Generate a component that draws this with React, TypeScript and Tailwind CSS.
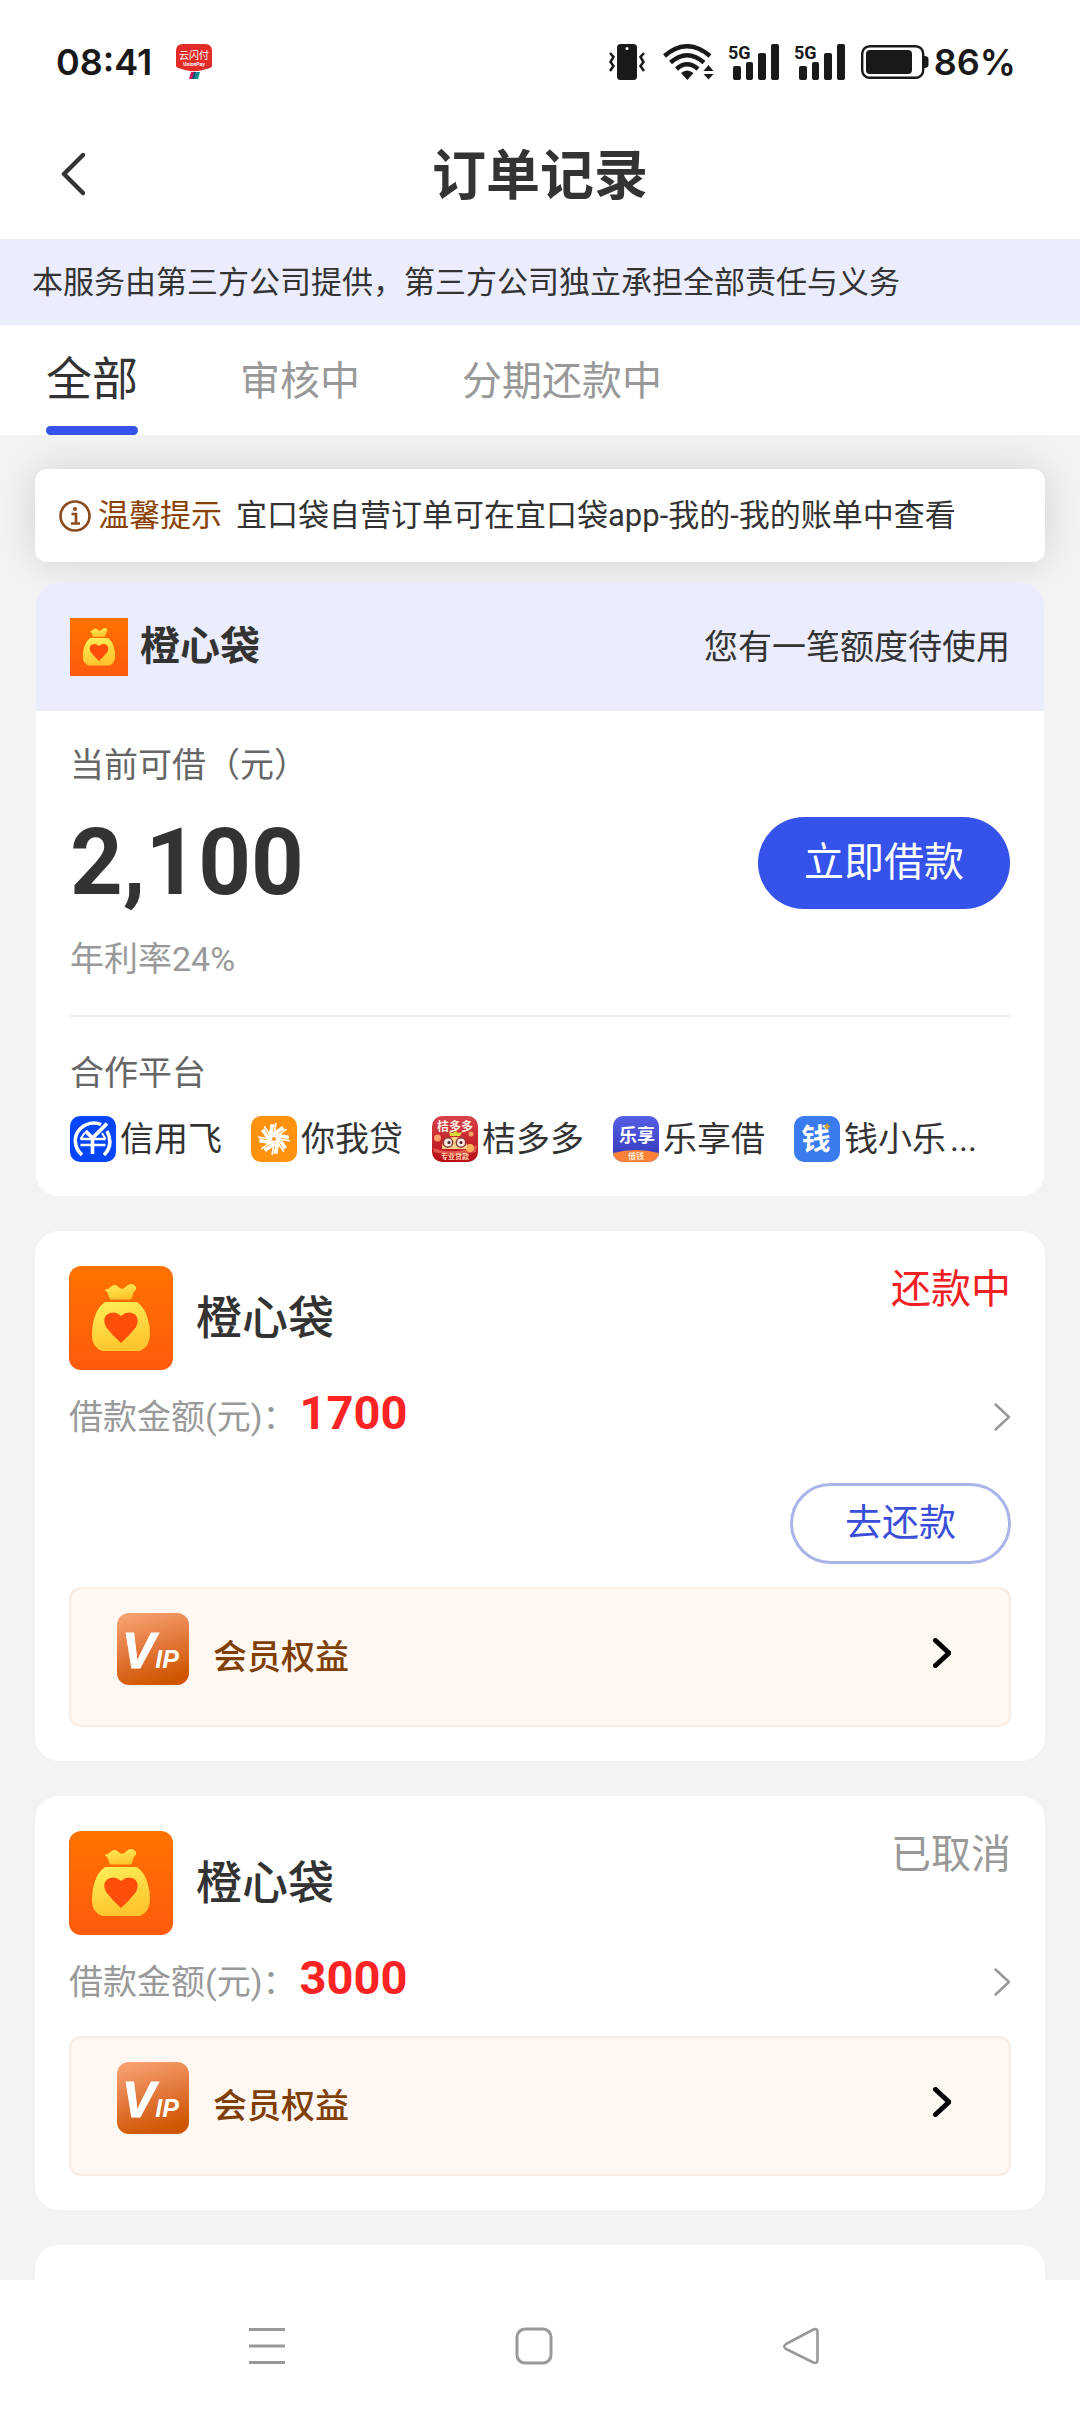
import React from "react";

function UnionPayIcon() {
  return (
    <svg width="36" height="36" viewBox="0 0 36 36" aria-label="云闪付">
      <path d="M7 0h22q7 0 7 7v15q0 1-2 2l-9 2.500q-7 1.500-14 0L2 24q-2-1-2-2V7q0-7 7-7z" fill="#e32b27" />
      <text x="18" y="15" fontSize="10" fill="#fff" textAnchor="middle" fontFamily="Noto Sans CJK SC, sans-serif">云闪付</text>
      <text x="18" y="22" fontSize="5" fontWeight="700" fill="#fff" textAnchor="middle" fontFamily="Roboto, sans-serif">UnionPay</text>
      <path d="M15 28h4l-2 7h-4z" fill="#c2185b" />
      <path d="M18 28h3l-2 7h-3z" fill="#1b4a7a" />
      <path d="M20 28h4l-2 7h-4z" fill="#0b8a8a" />
    </svg>
  );
}

function VibrateIcon() {
  return (
    <svg width="36" height="36" viewBox="0 0 36 36" fill="none" stroke="#191919" strokeWidth="2.500">
      <rect x="8" y="0" width="20" height="36" rx="3.500" fill="#191919" stroke="none" />
      <circle cx="18" cy="4.500" r="1.500" fill="#fff" stroke="none" />
      <path d="M1 9l3.500 4-3 5 3 4L1 27" />
      <path d="M35 9l-3.500 4 3 5-3 4 3.500 5" />
    </svg>
  );
}

function WifiIcon() {
  return (
    <svg width="51" height="36" viewBox="0 0 51 36" fill="none" stroke="#191919" strokeWidth="4.400">
      <path d="M1.500 12Q24 -7.500 47 12" />
      <path d="M7.500 18.500Q24 4 41 18.500" />
      <path d="M13.500 25Q24 15.500 35 25" />
      <path d="M18 29q6-5 12.500 0L24.300 36z" fill="#191919" stroke="none" />
      <path d="M45.500 21l5 6h-10zM45.500 35.500l5-5.500h-10z" fill="#191919" stroke="none" />
    </svg>
  );
}

function SignalIcon() {
  return (
    <svg width="51" height="38" viewBox="0 0 51 38" fill="#191919">
      <text x="0" y="17" fontSize="18" fontWeight="700" fontFamily="Roboto, sans-serif">5G</text>
      <rect x="5" y="24" width="8" height="14" rx="2" />
      <rect x="18" y="20" width="7" height="18" rx="2" />
      <rect x="30" y="11" width="8" height="27" rx="2" />
      <rect x="43" y="2" width="8" height="36" rx="2" />
    </svg>
  );
}

function BatteryIcon() {
  return (
    <svg width="68" height="34" viewBox="0 0 68 34">
      <rect x="1.200" y="1.200" width="61" height="31.600" rx="7.500" fill="none" stroke="#191919" strokeWidth="2.400" />
      <rect x="5" y="5" width="46" height="24" rx="4" fill="#191919" />
      <path d="M63 11q4.500 0 4.500 3v6q0 3-4.500 3z" fill="#191919" />
    </svg>
  );
}

function StatusBar() {
  return (
    <div className="flex h-[124px] items-center pr-16 pl-14 font-['Inter','Noto_Sans_CJK_SC',sans-serif] text-[36px] text-[#191919]">
      <span className="font-semibold">08:41</span>
      <span className="ml-6">
        <UnionPayIcon />
      </span>
      <div className="ml-auto flex items-center">
        <VibrateIcon />
        <span className="ml-[18px]">
          <WifiIcon />
        </span>
        <span className="mb-[3px] ml-[14px]">
          <SignalIcon />
        </span>
        <span className="mb-[3px] ml-[15px]">
          <SignalIcon />
        </span>
        <span className="mr-[5px] ml-4">
          <BatteryIcon />
        </span>
        <span className="font-semibold">86%</span>
      </div>
    </div>
  );
}

function BagLogo({ id, className }: { id: string; className: string }) {
  return (
    <svg viewBox="0 0 104 104" className={className} aria-hidden="true">
      <defs>
        <linearGradient id={id + "-bg"} x1="0" y1="0" x2="0" y2="1">
          <stop offset="0" stopColor="#ff7300" />
          <stop offset="1" stopColor="#ff5a0c" />
        </linearGradient>
        <linearGradient id={id + "-bag"} x1="0" y1="0" x2="0.300" y2="1">
          <stop offset="0" stopColor="#fdf05a" />
          <stop offset="1" stopColor="#ffc52e" />
        </linearGradient>
      </defs>
      <rect width="104" height="104" fill={"url(#" + id + "-bg)"} />
      <path
        d="M35.500 23.500q3 .500 6-2.500 4-4 8 0 3.500 3.500 7 0 4-4.500 8-2.500 4 2.500 2 6-2.500 1.500-3 6l-1.500 3H41l-1.500-4q-.500-3-4-6z"
        fill={"url(#" + id + "-bag)"}
      />
      <path
        d="M36 36H68q8 6 10.500 16 2.500 7 2.500 16 0 13-10 17H33q-10-4-10-15 0-12 3-20 3-9 10-14z"
        fill={"url(#" + id + "-bag)"}
      />
      <path d="M52 50q7-6 14-1.500 5 5 1 12.500Q61 69 52 77 43 69 37 61q-4-8 1-12.500 7-4.500 14 1.500z" fill="#ff4d0a" />
    </svg>
  );
}

function VipIcon({ id }: { id: string }) {
  return (
    <svg width="72" height="72" viewBox="0 0 72 72" className="mb-2 ml-[46px] shrink-0" role="img" aria-label="VIP">
      <defs>
        <linearGradient id={id} x1="0.200" y1="0" x2="0.500" y2="1">
          <stop offset="0" stopColor="#f7a271" />
          <stop offset="0.550" stopColor="#e17436" />
          <stop offset="1" stopColor="#cf5600" />
        </linearGradient>
      </defs>
      <rect width="72" height="72" rx="12" fill={"url(#" + id + ")"} />
      <text x="5" y="55" fill="#fff" stroke="#fff" strokeWidth="1" fontSize="50" fontFamily="Liberation Sans, sans-serif" fontWeight="700" fontStyle="italic">
        V<tspan fontSize="25" strokeWidth="0">IP</tspan>
      </text>
    </svg>
  );
}

function Chevron({ className, size, stroke }: { className: string; size: number; stroke: number }) {
  return (
    <svg width={size * 0.6} height={size} viewBox="0 0 18 30" className={className} fill="none" stroke="currentColor" strokeWidth={stroke} aria-hidden="true">
      <path d="M2.500 2.500L16 15 2.500 27.500" strokeLinecap="round" strokeLinejoin="round" />
    </svg>
  );
}

function XinyongfeiLogo() {
  return (
    <svg width="46" height="46" viewBox="0 0 46 46" aria-hidden="true">
      <rect width="46" height="46" rx="10" fill="#0546fb" />
      <g fill="none" stroke="#fff">
        <path d="M12 39C4 32 3 20 10 13q6-6 14-6 4 0 7 1.500" strokeWidth="3.600" />
        <path d="M37 15q7 14-3 24" strokeWidth="3.600" />
        <path d="M15.500 15l7 7L37 7.500" strokeWidth="3.800" />
        <path d="M10.500 23h25M10.500 29h25" strokeWidth="2.600" />
        <path d="M22.500 22v16" strokeWidth="3.600" />
        <path d="M10.500 23l4-6M32 17l3.500 6" strokeWidth="2" />
      </g>
    </svg>
  );
}

function NiwodaiLogo() {
  const petals = [0, 45, 90, 135, 180, 225, 270, 315];
  return (
    <svg width="46" height="46" viewBox="0 0 46 46" aria-hidden="true">
      <rect width="46" height="46" rx="10" fill="#ff920f" />
      <g fill="none" stroke="#fff">
        {petals.map((a) => (
          <g key={a} transform={"rotate(" + a + " 23 23)"}>
            <path d="M19 21l2.500-12.500" strokeWidth="3.600" />
            <path d="M23 18l2-11" strokeWidth="1.600" />
            <path d="M19.500 9.500l4 0" strokeWidth="2" />
          </g>
        ))}
      </g>
      <circle cx="23" cy="23" r="3" fill="none" stroke="#fff" strokeWidth="2" />
    </svg>
  );
}

function JuduoduoLogo() {
  return (
    <svg width="46" height="46" viewBox="0 0 46 46" aria-hidden="true">
      <defs>
        <linearGradient id="jdd" x1="0" y1="0" x2="0" y2="1">
          <stop offset="0" stopColor="#d8434a" />
          <stop offset="1" stopColor="#b90d14" />
        </linearGradient>
      </defs>
      <rect width="46" height="46" rx="10" fill="url(#jdd)" />
      <path d="M1 32q22 8 44-3l-1 7q-21 6-42 0z" fill="#e3574c" />
      <circle cx="5.500" cy="22" r="3.500" fill="#f5a06a" />
      <circle cx="39" cy="18" r="2.500" fill="#f5a06a" />
      <circle cx="38" cy="32" r="4" fill="#fbb45c" />
      <path d="M10 33q-1-11 12-12 14 0 13 12z" fill="#f8d58a" />
      <path d="M18 20l-1-4 4 1 3-2 2 2 4-1-2 4z" fill="#d9d93c" />
      <circle cx="16" cy="26.500" r="4.700" fill="#fbe9e0" stroke="#8c3a3a" strokeWidth="1.500" />
      <circle cx="29" cy="26.500" r="4.700" fill="#fbe9e0" stroke="#8c3a3a" strokeWidth="1.500" />
      <circle cx="17" cy="26.500" r="1.600" fill="#4b2730" />
      <circle cx="29" cy="26.500" r="1.600" fill="#4b2730" />
      <g fill="#fff0e6" textAnchor="middle" fontFamily="Noto Sans CJK SC, sans-serif" fontWeight="700">
        <text x="23" y="15" fontSize="12">桔多多</text>
        <text x="23" y="43" fontSize="7" fill="#ffd5b0">专业贷款</text>
      </g>
    </svg>
  );
}

function LexiangLogo() {
  return (
    <svg width="46" height="46" viewBox="0 0 46 46" aria-hidden="true">
      <defs>
        <linearGradient id="lxj" x1="0" y1="0" x2="0" y2="1">
          <stop offset="0" stopColor="#5560e6" />
          <stop offset="0.800" stopColor="#3a3fc0" />
        </linearGradient>
        <clipPath id="lxj-clip">
          <rect width="46" height="46" rx="10" />
        </clipPath>
      </defs>
      <g clipPath="url(#lxj-clip)">
        <rect width="46" height="46" fill="url(#lxj)" />
        <path d="M0 37q23-6 46 0v9H0z" fill="#fb8136" />
      </g>
      <g fill="#fff" textAnchor="middle" fontFamily="Noto Sans CJK SC, sans-serif" fontWeight="700">
        <text x="24" y="26" fontSize="18">乐享</text>
        <text x="23" y="43" fontSize="8" fill="#ffe6d2">借钱</text>
      </g>
    </svg>
  );
}

function QianxiaoleLogo() {
  return (
    <svg width="46" height="46" viewBox="0 0 46 46" aria-hidden="true">
      <rect width="46" height="46" rx="10" fill="#3a7bf0" />
      <text x="22" y="34" fontSize="29" fontWeight="700" fill="#fff" textAnchor="middle" fontFamily="Noto Sans CJK SC, sans-serif">钱</text>
      <path d="M33 7l3 3.500-3 3.500-3-3.500z" fill="#c9a13a" />
    </svg>
  );
}

const partners = [
  { name: "信用飞", Logo: XinyongfeiLogo },
  { name: "你我贷", Logo: NiwodaiLogo },
  { name: "桔多多", Logo: JuduoduoLogo },
  { name: "乐享借", Logo: LexiangLogo },
  { name: "钱小乐", Logo: QianxiaoleLogo },
];

function LoanCard() {
  return (
    <section className="mx-px mt-[21px] overflow-hidden rounded-[22px] bg-white">
      <div className="flex h-[128px] items-center bg-[#ebedfd] px-[34px]">
        <BagLogo id="head" className="h-[58px] w-[58px]" />
        <h2 className="ml-3 text-[40px] leading-[56px] font-bold">橙心袋</h2>
        <p className="ml-auto text-[34px] leading-[48px]">您有一笔额度待使用</p>
      </div>
      <div className="px-[34px] pt-[30px] pb-[34px]">
        <p className="text-[34px] leading-[48px] text-[#666]">当前可借（元）</p>
        <div className="mt-7 flex items-center justify-between">
          <strong className="text-[92px] leading-[92px] font-bold">2,100</strong>
          <button type="button" className="h-[92px] rounded-full bg-[#3552ea] px-[46px] text-[40px] leading-[92px] text-white">
            立即借款
          </button>
        </div>
        <p className="mt-[26px] text-[34px] leading-[48px] text-[#999]">年利率24%</p>
        <div className="mt-8 h-[2px] bg-[#ebebeb]" />
        <p className="mt-8 text-[34px] leading-[48px] text-[#666]">合作平台</p>
        <ul className="mt-[19px] flex text-[34px] leading-[46px]">
          {partners.map(({ name, Logo }) => (
            <li key={name} className="mr-[29px] flex items-center gap-1 nth-5:mr-1">
              <Logo />
              {name}
            </li>
          ))}
          <li aria-label="更多">...</li>
        </ul>
      </div>
    </section>
  );
}

type Order = { id: string; amount: number; status: string; active: boolean };

const orders: Order[] = [
  { id: "a", amount: 1700, status: "还款中", active: true },
  { id: "b", amount: 3000, status: "已取消", active: false },
];

function OrderCard({ order }: { order: Order }) {
  return (
    <article className="mt-[35px] rounded-[24px] bg-white px-[34px] pt-[35px] pb-[34px]">
      <div className="flex items-center">
        <BagLogo id={"order-" + order.id} className="h-[104px] w-[104px] rounded-xl" />
        <h3 className="ml-[23px] text-[46px] leading-[60px] font-medium">橙心袋</h3>
        <span className={order.active ? "ml-auto self-start text-[40px] leading-[48px] text-[#f02024]" : "ml-auto self-start text-[40px] leading-[48px] text-[#999]"}>
          {order.status}
        </span>
      </div>
      <a href="#detail" className="mt-[23px] flex h-12 items-center text-[34px] leading-[48px] text-[#999]">
        <span>借款金额(元)：</span>
        <strong className="mb-2 ml-[3px] text-[47px] leading-[48px] font-bold text-[#fb2323]">{order.amount}</strong>
        <Chevron className="ml-auto" size={30} stroke={2.5} />
      </a>
      {order.active ? (
        <div className="mt-[42px] mb-[23px] flex justify-end">
          <button type="button" className="h-[81px] rounded-full border-3 border-[#aab4e8] px-[52px] text-[37px] leading-[74px] text-[#3a4ed8]">
            去还款
          </button>
        </div>
      ) : (
        <div className="h-[30px]" />
      )}
      <a href="#vip" className="flex h-[140px] items-center rounded-xl border-2 border-[#f9ece3] bg-[#fff7f1] pr-[58px] pb-2 text-[#7f3f05]">
        <VipIcon id={"vip-" + order.id} />
        <span className="mt-2 ml-6 text-[34px] leading-[48px] font-medium">会员权益</span>
        <Chevron className="ml-auto text-black" size={30} stroke={5} />
      </a>
    </article>
  );
}

export default function App() {
  return (
    <div className="flex h-screen flex-col bg-white font-['Roboto','Noto_Sans_CJK_SC',sans-serif] text-[#333]">
      <StatusBar />
      <header className="grid h-[115px] grid-cols-[120px_1fr_120px] items-center pb-[14px]">
        <button type="button" aria-label="返回" className="flex h-20 items-center pl-[61px]">
          <svg width="24" height="44" viewBox="0 0 24 44" fill="none" stroke="#333" strokeWidth="4.500" strokeLinecap="round" strokeLinejoin="round">
            <path d="M22 2L3 21l19 19" />
          </svg>
        </button>
        <h1 className="pt-1 text-center text-[54px] leading-[72px] font-bold">订单记录</h1>
      </header>
      <p className="bg-[#ebedfd] px-8 pt-5 pb-[18px] text-[31px] leading-[48px]">
        本服务由第三方公司提供，第三方公司独立承担全部责任与义务
      </p>
      <nav className="flex h-[110px] gap-[102px] px-[46px] text-[40px] text-[#999]">
        <button type="button" aria-current="true" className="flex flex-col justify-between pt-6 text-[46px] leading-[60px] text-[#333]">
          全部
          <span className="h-[9px] w-full rounded-full bg-[#3552ea]" />
        </button>
        <button type="button" className="pt-[3px]">审核中</button>
        <button type="button" className="pt-[3px]">分期还款中</button>
      </nav>
      <main className="min-h-0 flex-1 overflow-hidden bg-[#f3f3f3] px-[35px] pt-[34px]">
        <div className="flex items-center rounded-xl bg-white px-6 py-[22px] text-[31px] leading-[49px] shadow-[0_0_40px_rgba(0,0,0,0.14)]">
          <svg width="32" height="32" viewBox="0 0 32 32" fill="none" stroke="#8a4a1c" strokeWidth="2.600" aria-hidden="true">
            <circle cx="16" cy="16" r="14.500" />
            <circle cx="16" cy="9" r="2" fill="#8a4a1c" stroke="none" />
            <path d="M12.500 14H17v9.500M12 23.500h9" />
          </svg>
          <span className="ml-[7px] text-[#8a4100]">温馨提示</span>
          <span className="ml-[14px]">宜口袋自营订单可在宜口袋app-我的-我的账单中查看</span>
        </div>
        <LoanCard />
        {orders.map((order) => (
          <OrderCard key={order.id} order={order} />
        ))}
        <article className="mt-[35px] h-[414px] rounded-[24px] bg-white" />
      </main>
      <footer className="grid h-[132px] grid-cols-[1fr_1fr_1fr] items-center pr-[145px] pl-[133px]">
        <button type="button" aria-label="最近任务" className="flex justify-center">
          <svg width="38" height="38" viewBox="0 0 38 38" stroke="#999" strokeWidth="3">
            <path d="M1 2.500h36M1 19h36M1 35.500h36" />
          </svg>
        </button>
        <button type="button" aria-label="主页" className="flex justify-center">
          <svg width="38" height="38" viewBox="0 0 38 38" fill="none" stroke="#999" strokeWidth="3">
            <rect x="2" y="2" width="34" height="34" rx="8" />
          </svg>
        </button>
        <button type="button" aria-label="返回上一页" className="flex justify-center">
          <svg width="38" height="38" viewBox="0 0 38 38" fill="none" stroke="#999" strokeWidth="2.600" strokeLinejoin="round">
            <path d="M31.500 2.500Q35.500 1 35.500 5v28q0 4-4 2.500L4 22q-3.500-2.500 0-5z" />
          </svg>
        </button>
      </footer>
    </div>
  );
}
